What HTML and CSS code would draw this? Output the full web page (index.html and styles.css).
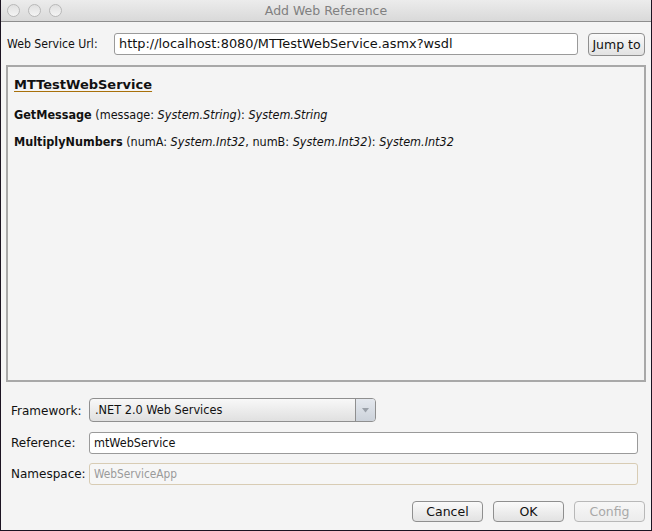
FILE: index.html
```html
<!DOCTYPE html>
<html>
<head>
<meta charset="utf-8">
<link rel="stylesheet" href="styles.css">
</head>
<body>
<div class="window">
  <div class="titlebar">
    <div class="lights"><span class="light"></span><span class="light"></span><span class="light"></span></div>
    <div class="title">Add Web Reference</div>
  </div>
  <div class="content">
    <div class="url-row">
      <label class="url-label">Web Service Url:</label>
      <div class="field url-field">http://localhost:8080/MTTestWebService.asmx?wsdl</div>
      <div class="btn jump">Jump to</div>
    </div>
    <div class="panel">
      <div class="svc-name">MTTestWebService</div>
      <div class="method"><b>GetMessage</b> (message: <i>System.String</i>): <i>System.String</i></div>
      <div class="method"><b>MultiplyNumbers</b> (numA: <i>System.Int32</i>, numB: <i>System.Int32</i>): <i>System.Int32</i></div>
    </div>
    <div class="form">
      <label class="flabel">Framework:</label>
      <div class="select">
        <span class="select-text">.NET 2.0 Web Services</span>
        <span class="select-arrow"><svg width="7" height="5" viewBox="0 0 7 5"><path d="M0 0H7L3.5 4.5Z" fill="#9aa0a8"/></svg></span>
      </div>
      <label class="flabel">Reference:</label>
      <div class="field ref-field">mtWebService</div>
      <label class="flabel">Namespace:</label>
      <div class="field disabled">WebServiceApp</div>
    </div>
    <div class="buttons">
      <div class="btn">Cancel</div>
      <div class="btn">OK</div>
      <div class="btn off">Config</div>
    </div>
  </div>
</div>
</body>
</html>
```

FILE: styles.css
```css
html, body {
  margin: 0;
  padding: 0;
}
body {
  font-family: "DejaVu Sans", "Liberation Sans", sans-serif;
  font-size: 12px;
  color: #111;
}
.window {
  width: 652px;
  height: 531px;
  box-sizing: border-box;
  border: 1px solid #1c1422;
  border-top: none;
  background: #f4f4f4;
  display: flex;
  flex-direction: column;
}
.titlebar {
  height: 21px;
  border-bottom: 1px solid #8e8e8e;
  background: linear-gradient(#ececec, #d9d9d9);
  display: flex;
  align-items: center;
  position: relative;
  flex-shrink: 0;
}
.lights {
  display: flex;
  gap: 8px;
  padding-left: 6px;
}
.light {
  width: 11px;
  height: 11px;
  border-radius: 50%;
  border: 1px solid #b8b8b8;
  background: linear-gradient(#e0e0e0, #f4f4f4);
}
.title {
  position: absolute;
  left: 0;
  right: 0;
  top: 3px;
  text-align: center;
  font-size: 12.5px;
  color: #808080;
}
.content {
  flex: 1;
  display: flex;
  flex-direction: column;
  padding: 10px 5px 0 5px;
}
.url-row {
  display: flex;
  align-items: center;
  height: 24px;
}
.cond,
.url-label,
.method,
.ref-field,
.select-text,
.disabled {
  font-family: "DejaVu Sans Condensed", "DejaVu Sans", sans-serif;
}
.url-label {
  padding-left: 1px;
  width: 107px;
  flex-shrink: 0;
  font-size: 12.2px;
}
.field {
  height: 22px;
  box-sizing: border-box;
  border: 1px solid #9a9a9a;
  border-radius: 3px;
  background: #fff;
  padding: 0 0 0 4px;
  line-height: 20px;
  white-space: nowrap;
  overflow: hidden;
}
.url-field {
  width: 464px;
  font-size: 12.9px;
}
.ref-field {
  font-size: 12.5px;
}
.btn {
  height: 23px;
  box-sizing: border-box;
  border: 1px solid #8f8f8f;
  border-radius: 4px;
  background: linear-gradient(#fafafa, #e2e2e2);
  line-height: 21px;
  text-align: center;
  font-size: 12.5px;
  color: #111;
}
.jump {
  margin-left: 10px;
  width: 57px;
}
.panel {
  margin-top: 9px;
  height: 317px;
  box-sizing: border-box;
  border: 2px solid #a8a8a8;
  background: #f4f4f4;
  padding: 8px 0 0 6px;
}
.svc-name {
  font-weight: bold;
  font-size: 13px;
  text-decoration: underline;
  text-decoration-color: #a8700a;
  text-underline-offset: 2px;
  height: 20px;
  line-height: 20px;
}
.method {
  margin-top: 10px;
  height: 20px;
  line-height: 20px;
  font-size: 12.5px;
}
.method + .method {
  margin-top: 7px;
}
.form {
  margin-top: 16px;
  display: grid;
  grid-template-columns: 78px 549px;
  row-gap: 9px;
  align-items: center;
  padding-left: 5px;
}
.select {
  width: 287px;
  height: 24px;
  box-sizing: border-box;
  border: 1px solid #8f8f8f;
  border-radius: 4px;
  background: linear-gradient(#f8f8f8, #e0e0e0);
  display: flex;
  align-items: stretch;
  margin-bottom: 1px;
}
.select-text {
  flex: 1;
  padding-left: 5px;
  line-height: 22px;
  font-size: 12.6px;
}
.select-arrow {
  width: 19px;
  border-left: 1px solid #8f8f8f;
  background: linear-gradient(#e4e8ee, #ccd2da);
  display: flex;
  align-items: center;
  justify-content: center;
  border-radius: 0 3px 3px 0;
}
.disabled {
  border-color: #d8ccb4;
  background: #f6f6f6;
  color: #9a9a9a;
  font-size: 11.8px;
}
.buttons {
  margin-top: 16px;
  display: flex;
  justify-content: flex-end;
  gap: 10px;
  padding-right: 1px;
}
.buttons .btn {
  width: 71px;
  height: 21px;
  line-height: 19px;
}
.btn.off {
  color: #a8a8a8;
  border-color: #b8b8b8;
  background: linear-gradient(#f7f7f7, #ececec);
}
```
